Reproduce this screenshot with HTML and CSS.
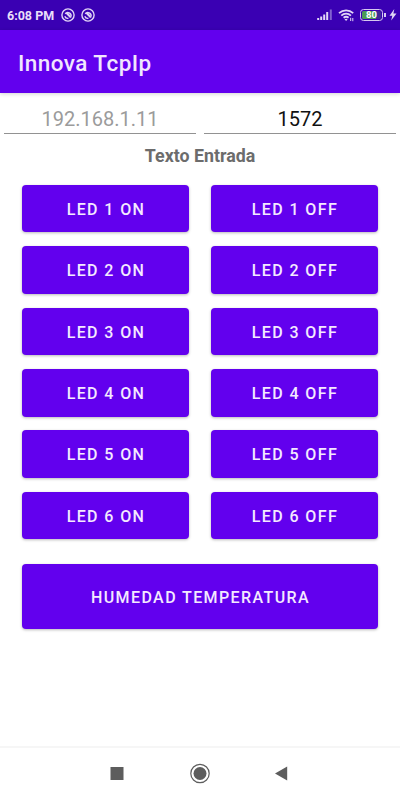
FILE: index.html
```html
<!DOCTYPE html>
<html lang="es">
<head>
  <meta charset="UTF-8">
  <meta name="viewport" content="width=device-width, initial-scale=1.0">
  <title>Innova TcpIp</title>
  <link rel="stylesheet" href="styles.css">
</head>
<body>
  <div class="status-bar">
    <span class="clock">6:08 PM</span>
    <svg class="notice" viewBox="0 0 14 14">
      <circle cx="7" cy="7" r="6.1" />
      <path d="M4.2 5.8a3.3 3.3 0 0 1 5.8 2.8M3.8 8.2a3.3 3.3 0 0 0 3.6 2.1" />
      <path class="hand" d="M4.4 5.2L7 4.6l3.6 4.6-1.6.9z" />
    </svg>
    <svg class="notice" viewBox="0 0 14 14">
      <circle cx="7" cy="7" r="6.1" />
      <path d="M4.2 5.8a3.3 3.3 0 0 1 5.8 2.8M3.8 8.2a3.3 3.3 0 0 0 3.6 2.1" />
      <path class="hand" d="M4.4 5.2L7 4.6l3.6 4.6-1.6.9z" />
    </svg>
    <div class="status-icons">
      <svg class="signal" viewBox="0 0 16 12">
        <path d="M1.2 11V9M4.2 11V7.5M7.2 11V5.5M10.2 11V3" />
        <path class="dim" d="M13.8 11V.5" />
      </svg>
      <svg class="wifi" viewBox="0 0 17 14">
        <path d="M1 5.2a10.4 10.4 0 0 1 14.2 0M3.3 7.6a7 7 0 0 1 9.6 0M5.6 9.8a3.8 3.8 0 0 1 5 0" />
        <path class="dot" d="M6.5 11.2q1.6-1.1 3.2 0L8.1 13z" />
        <path class="arrows" d="M12.7 13v-3.2M14.8 10v3.2" />
      </svg>
      <div class="battery"><span>80</span></div>
      <svg class="bolt" viewBox="0 0 8 12">
        <path d="M5.3 0L.5 6.7h2.8L2.2 11.6 7.5 4.6H4.4z" />
      </svg>
    </div>
  </div>

  <header class="app-bar">
    <h1>Innova TcpIp</h1>
  </header>

  <main>
    <!-- Server address and port -->
    <div class="connection">
      <input type="text" placeholder="192.168.1.11" aria-label="IP">
      <input type="text" value="1572" aria-label="Puerto">
    </div>
    <p class="incoming">Texto Entrada</p>

    <div class="leds">
      <button>LED 1 ON</button>
      <button>LED 1 OFF</button>
      <button>LED 2 ON</button>
      <button>LED 2 OFF</button>
      <button>LED 3 ON</button>
      <button>LED 3 OFF</button>
      <button>LED 4 ON</button>
      <button>LED 4 OFF</button>
      <button>LED 5 ON</button>
      <button>LED 5 OFF</button>
      <button>LED 6 ON</button>
      <button>LED 6 OFF</button>
    </div>
    <button class="sensor">HUMEDAD TEMPERATURA</button>
  </main>

  <nav class="nav-bar">
    <svg viewBox="0 0 24 24"><rect x="5.5" y="6" width="13" height="13" /></svg>
    <svg viewBox="0 0 24 24">
      <circle class="ring" cx="12" cy="12.5" r="9.2" />
      <circle cx="12" cy="12.5" r="6.5" />
    </svg>
    <svg viewBox="0 0 24 24"><path d="M4 12.5L16.2 5.5v14z" /></svg>
  </nav>
</body>
</html>
```
FILE: styles.css
```css
* {
  box-sizing: border-box;
}
body {
  margin: 0;
  height: 100vh;
  display: flex;
  flex-direction: column;
  background: #fff;
  font-family: Roboto, "Liberation Sans", sans-serif;
  overflow: hidden;
}

/* System status bar */
.status-bar {
  height: 30px;
  padding: 0 3px 0 7px;
  display: flex;
  align-items: center;
  background: #3a00b3;
  color: #e9defa;
}
.clock {
  width: 54px;
  font-size: 12.5px;
  font-weight: 700;
  white-space: nowrap;
}
.status-bar svg {
  fill: none;
  stroke: #e2d6f6;
}
.notice {
  width: 14px;
  height: 14px;
  margin-right: 6px;
  stroke-width: 1.4;
}
.status-bar .hand {
  fill: #e2d6f6;
  stroke: none;
}
.status-icons {
  margin-left: auto;
  display: flex;
  align-items: center;
}
.signal {
  width: 16px;
  height: 12px;
  margin-right: 5px;
  stroke-width: 2;
}
.signal .dim {
  stroke: #8262cf;
}
.wifi {
  width: 17px;
  height: 14px;
  margin-right: 5px;
  stroke-width: 1.8;
}
.status-bar .dot {
  fill: #e2d6f6;
  stroke: none;
}
.wifi .arrows {
  stroke-width: 1;
}
.battery {
  position: relative;
  width: 23px;
  height: 12px;
  margin-right: 6px;
  border: 1.5px solid #d6c9ef;
  border-radius: 3.5px;
  background: linear-gradient(to right, #4c9a55 72%, #3f2a96 72%) content-box;
  padding: 1px;
  display: flex;
  align-items: center;
  justify-content: center;
  font-size: 9.5px;
  font-weight: 700;
  line-height: 8px;
  color: #fff;
}
/* Battery terminal */
.battery::after {
  content: "";
  position: absolute;
  right: -3.5px;
  top: 2.5px;
  width: 2px;
  height: 4px;
  background: #d6c9ef;
}
.status-bar .bolt {
  width: 8px;
  height: 12px;
  fill: #e2d6f6;
  stroke: none;
}

.app-bar {
  height: 62.5px;
  padding: 0 18px;
  display: flex;
  align-items: center;
  background: #6200ee;
  box-shadow: 0 1px 4px rgba(0,0,0,0.18);
}
.app-bar h1 {
  margin: 3px 0 0;
  font-size: 22.5px;
  font-weight: 500;
  letter-spacing: 0.45px;
  color: #f1e6fe;
}

main {
  flex: 1;
  display: flex;
  flex-direction: column;
}
.connection {
  display: grid;
  grid-template-columns: 1fr 1fr;
  gap: 8px;
  padding: 8px 4px 0;
}
.connection input {
  width: 100%;
  height: 33px;
  padding: 5px 0 0;
  border: 0;
  border-bottom: 1px solid #929292;
  background: none;
  font-family: inherit;
  font-size: 20px;
  text-align: center;
  color: #111;
  outline: none;
}
.connection input::placeholder {
  color: #9b9b9b;
}
.incoming {
  margin: 11px 0 1px;
  font-size: 17.8px;
  font-weight: 700;
  line-height: 22px;
  text-align: center;
  color: #6c6c6c;
}

button {
  border: 0;
  border-radius: 4px;
  background: #6200ee;
  color: #f4e9ff;
  font-family: inherit;
  font-size: 16px;
  font-weight: 500;
  letter-spacing: 1.4px;
  padding: 1.4px 0 0 1px;
  box-shadow: 0 1px 3px rgba(0,0,0,0.28);
  cursor: pointer;
}
.leds {
  display: grid;
  grid-template-columns: 1fr 1fr;
  grid-auto-rows: 47.7px;
  gap: 13.7px 22.6px;
  margin: 17.3px 22.3px 25px;
}
.sensor {
  height: 64.3px;
  margin: 0 22.3px;
}

/* System navigation bar */
.nav-bar {
  height: 54px;
  padding-bottom: 2px;
  border-top: 2px solid #f6f6f6;
  display: flex;
  justify-content: center;
  align-items: center;
  gap: 59px;
}
.nav-bar svg {
  width: 24px;
  height: 24px;
  fill: #5d5d5d;
}
.nav-bar .ring {
  fill: none;
  stroke: #5d5d5d;
  stroke-width: 1.2;
}
```
